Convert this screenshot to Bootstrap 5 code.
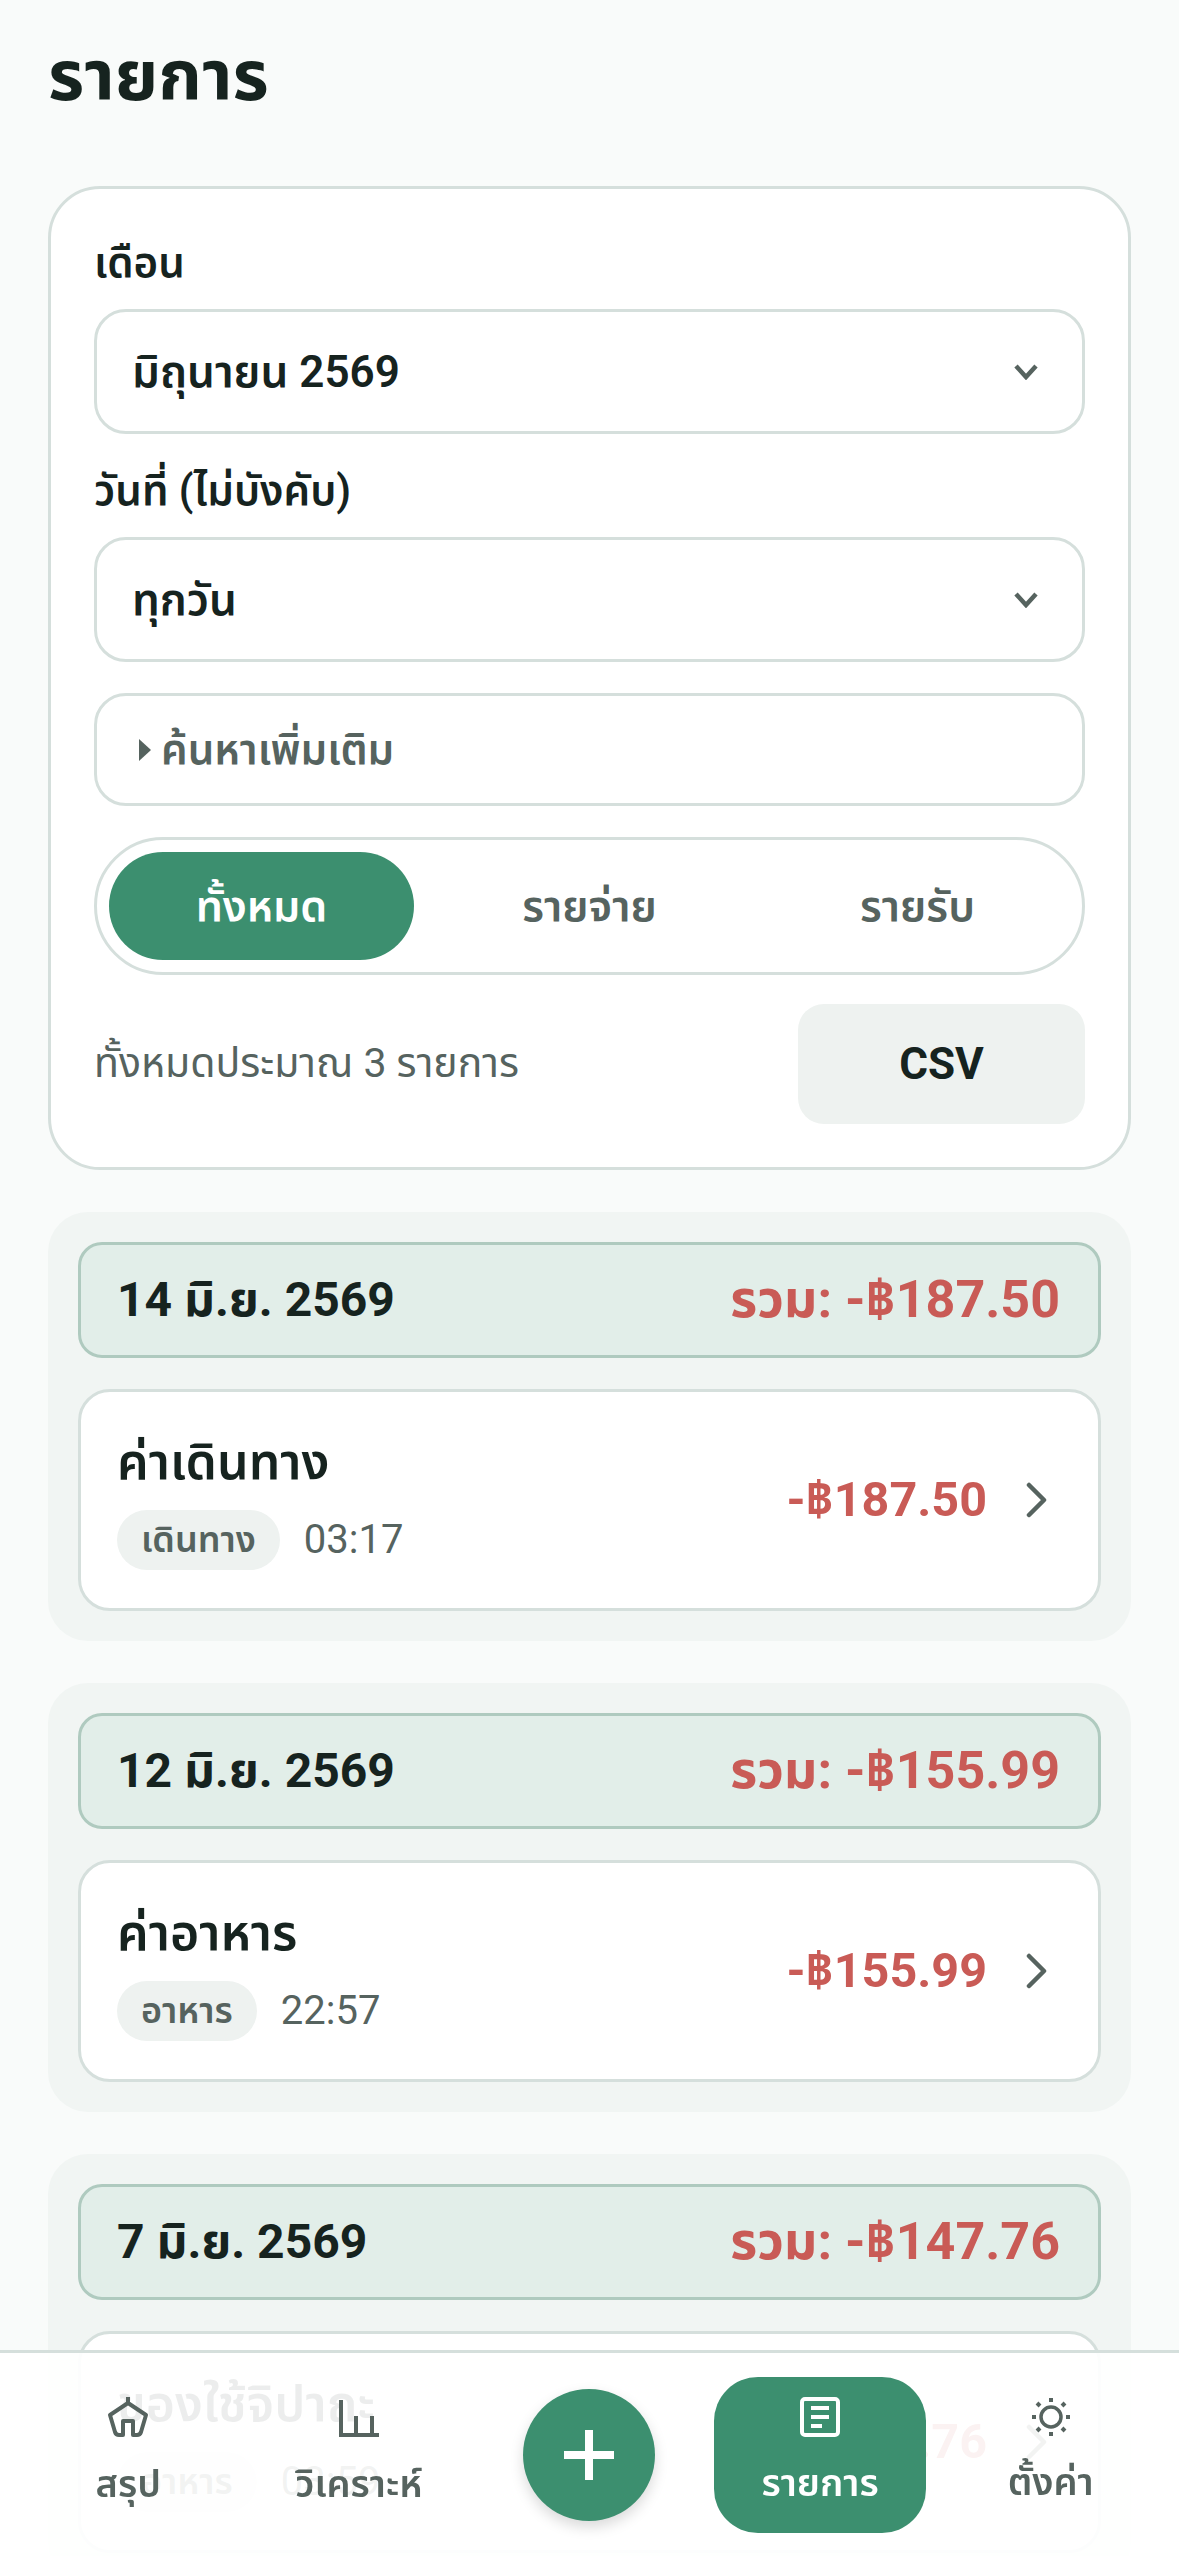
<!DOCTYPE html>
<html lang="th">
<head>
<meta charset="utf-8">
<title>รายการ</title>
<link href="https://cdn.jsdelivr.net/npm/bootstrap@5.3.0/dist/css/bootstrap.min.css" rel="stylesheet">
<style>
body{background:#f9fbfa;color:#16231f;font-family:"Roboto","Noto Sans Thai","Noto Sans",sans-serif;overflow:hidden}
.app-shell{height:2556px;overflow:hidden;padding:0 48px}
.page-title{font-size:70px;font-weight:700;line-height:74px;margin:39px 0 0;height:147px}
.filter-box{background:#fff;border:3px solid #d5dfdc;border-radius:52px;padding:48px 43px 42px;height:984px}
.field-label{font-size:42px;font-weight:600;line-height:52px;margin-bottom:20px}
.pick-box{height:125px;border:3px solid #d5dfdc;border-radius:32px;padding:0 44px 0 35px;font-size:44px;font-weight:600;margin-bottom:31px}
.more-box{height:113px;border:3px solid #d5dfdc;border-radius:32px;padding:0 42px;font-size:42px;font-weight:600;color:#56635f;margin-bottom:31px}
.caret-r{width:0;height:0;border-left:12px solid #56635f;border-top:11px solid transparent;border-bottom:11px solid transparent;margin-right:10px}
.seg-box{height:138px;border:3px solid #d5dfdc;border-radius:69px;padding:12px;margin-bottom:29px;gap:23px}
.seg-item{flex:1 1 0;font-size:43px;font-weight:600;color:#56635f;border-radius:54px}
.seg-on{background:#3c8f6f;color:#fff}
.count-text{font-size:41px;color:#56635f}
.csv-btn{width:287px;height:120px;background:#eef2f0;border-radius:26px;font-size:44px;font-weight:700;color:#16231f;border:0}
.day-group{background:#f1f5f3;border-radius:40px;padding:30px;margin-top:42px;height:429px}
.day-head{height:116px;background:#e2eee9;border:3px solid #afcabf;border-radius:24px;padding:0 38px 0 36px;margin-bottom:31px}
.day-date{font-size:48px;font-weight:700}
.day-sum{font-size:52px;font-weight:700;color:#c95b56}
.tx-card{height:222px;background:#fff;border:3px solid #d5dfdc;border-radius:32px;padding:0 50px 0 36px}
.tx-name{font-size:50px;font-weight:600;line-height:64px;margin-bottom:16px}
.tx-chip{background:#eef2f0;color:#56635f;font-size:36px;font-weight:600;border-radius:30px;padding:0 24px;height:60px;display:flex;align-items:center}
.tx-time{font-size:40px;color:#56635f}
.tx-amt{font-size:48.5px;font-weight:700;color:#c95b56}
.tx-end{gap:39px}
.bottom-bar{height:206px;background:rgba(255,255,255,.92);border-top:3px solid #d5dfdc;padding:0 13px}
.nav-col{flex:1 1 0}
.nav-cell{width:212px;height:156px;color:#56635f;font-size:38px;font-weight:600;border-radius:44px;text-decoration:none;gap:18px}
.nav-on{background:#3c8f6f;color:#fff}
.fab-btn{width:132px;height:132px;border-radius:50%;background:#3c8f6f;border:0;box-shadow:0 6px 14px rgba(0,0,0,.15);padding:0}
</style>
</head>
<body>
<div class="app-shell">
<h1 class="page-title">รายการ</h1>
<section class="filter-box">
<div class="field-label">เดือน</div>
<div class="pick-box d-flex align-items-center justify-content-between"><span>มิถุนายน 2569</span><svg width="24" height="16" viewBox="0 0 24 16"><path d="M2 2l10 11L22 2" fill="none" stroke="#56635f" stroke-width="4.5"/></svg></div>
<div class="field-label">วันที่ (ไม่บังคับ)</div>
<div class="pick-box d-flex align-items-center justify-content-between"><span>ทุกวัน</span><svg width="24" height="16" viewBox="0 0 24 16"><path d="M2 2l10 11L22 2" fill="none" stroke="#56635f" stroke-width="4.5"/></svg></div>
<div class="more-box d-flex align-items-center"><span class="caret-r"></span><span>ค้นหาเพิ่มเติม</span></div>
<div class="seg-box d-flex"><div class="seg-item seg-on d-flex align-items-center justify-content-center">ทั้งหมด</div><div class="seg-item d-flex align-items-center justify-content-center">รายจ่าย</div><div class="seg-item d-flex align-items-center justify-content-center">รายรับ</div></div>
<div class="d-flex align-items-center justify-content-between"><span class="count-text">ทั้งหมดประมาณ 3 รายการ</span><button class="csv-btn btn">CSV</button></div>
</section>
<section class="day-group">
<div class="day-head d-flex align-items-center justify-content-between"><span class="day-date">14 มิ.ย. 2569</span><span class="day-sum">รวม: -฿187.50</span></div>
<div class="tx-card d-flex align-items-center justify-content-between"><div><div class="tx-name">ค่าเดินทาง</div><div class="d-flex align-items-center gap-4"><span class="tx-chip">เดินทาง</span><span class="tx-time">03:17</span></div></div><div class="tx-end d-flex align-items-center"><span class="tx-amt">-฿187.50</span><svg width="22" height="36" viewBox="0 0 22 36"><path d="M3 3l15 15L3 33" fill="none" stroke="#56635f" stroke-width="4.5" stroke-linecap="round" stroke-linejoin="round"/></svg></div></div>
</section>
<section class="day-group">
<div class="day-head d-flex align-items-center justify-content-between"><span class="day-date">12 มิ.ย. 2569</span><span class="day-sum">รวม: -฿155.99</span></div>
<div class="tx-card d-flex align-items-center justify-content-between"><div><div class="tx-name">ค่าอาหาร</div><div class="d-flex align-items-center gap-4"><span class="tx-chip">อาหาร</span><span class="tx-time">22:57</span></div></div><div class="tx-end d-flex align-items-center"><span class="tx-amt">-฿155.99</span><svg width="22" height="36" viewBox="0 0 22 36"><path d="M3 3l15 15L3 33" fill="none" stroke="#56635f" stroke-width="4.5" stroke-linecap="round" stroke-linejoin="round"/></svg></div></div>
</section>
<section class="day-group">
<div class="day-head d-flex align-items-center justify-content-between"><span class="day-date">7 มิ.ย. 2569</span><span class="day-sum">รวม: -฿147.76</span></div>
<div class="tx-card d-flex align-items-center justify-content-between"><div><div class="tx-name">ของใช้จิปาถะ</div><div class="d-flex align-items-center gap-4"><span class="tx-chip">อาหาร</span><span class="tx-time">03:59</span></div></div><div class="tx-end d-flex align-items-center"><span class="tx-amt">-฿147.76</span><svg width="22" height="36" viewBox="0 0 22 36"><path d="M3 3l15 15L3 33" fill="none" stroke="#56635f" stroke-width="4.5" stroke-linecap="round" stroke-linejoin="round"/></svg></div></div>
</section>
</div>
<nav class="bottom-bar fixed-bottom d-flex align-items-center">
<div class="nav-col d-flex justify-content-center"><a class="nav-cell d-flex flex-column align-items-center justify-content-center" href="#"><svg width="44" height="42" viewBox="0 0 44 42"><path d="M22 1v6M22 7L4 19l5 17q1 3 4 3h4V25h10v14h4q3 0 4-3l5-17z" fill="none" stroke="#56635f" stroke-width="4" stroke-linejoin="round"/></svg>สรุป</a></div>
<div class="nav-col d-flex justify-content-center"><a class="nav-cell d-flex flex-column align-items-center justify-content-center" href="#"><svg width="44" height="42" viewBox="0 0 44 42"><path d="M2 39H42M4 39V4M19 39V20M35 39V20" fill="none" stroke="#56635f" stroke-width="4"/></svg>วิเคราะห์</a></div>
<div class="nav-col d-flex justify-content-center"><button class="fab-btn" aria-label="เพิ่ม"><svg width="50" height="50" viewBox="0 0 50 50"><path d="M25 0V50M0 25H50" stroke="#fff" stroke-width="8"/></svg></button></div>
<div class="nav-col d-flex justify-content-center"><a class="nav-cell nav-on d-flex flex-column align-items-center justify-content-center" href="#"><svg width="40" height="40" viewBox="0 0 40 40"><rect x="2" y="2" width="36" height="36" rx="3" fill="none" stroke="#fff" stroke-width="4"/><path d="M11 11H29M11 20H29M11 29H22" stroke="#fff" stroke-width="4"/></svg>รายการ</a></div>
<div class="nav-col d-flex justify-content-center"><a class="nav-cell d-flex flex-column align-items-center justify-content-center" href="#"><svg width="38" height="38" viewBox="0 0 38 38"><circle cx="19" cy="19" r="10" fill="none" stroke="#56635f" stroke-width="3.5"/><path d="M19 0v4M19 34v4M0 19h4M34 19h4M5 5l3 3M30 30l3 3M5 33l3-3M30 8l3-3" stroke="#56635f" stroke-width="4"/></svg>ตั้งค่า</a></div>
</nav>
</body>
</html>
